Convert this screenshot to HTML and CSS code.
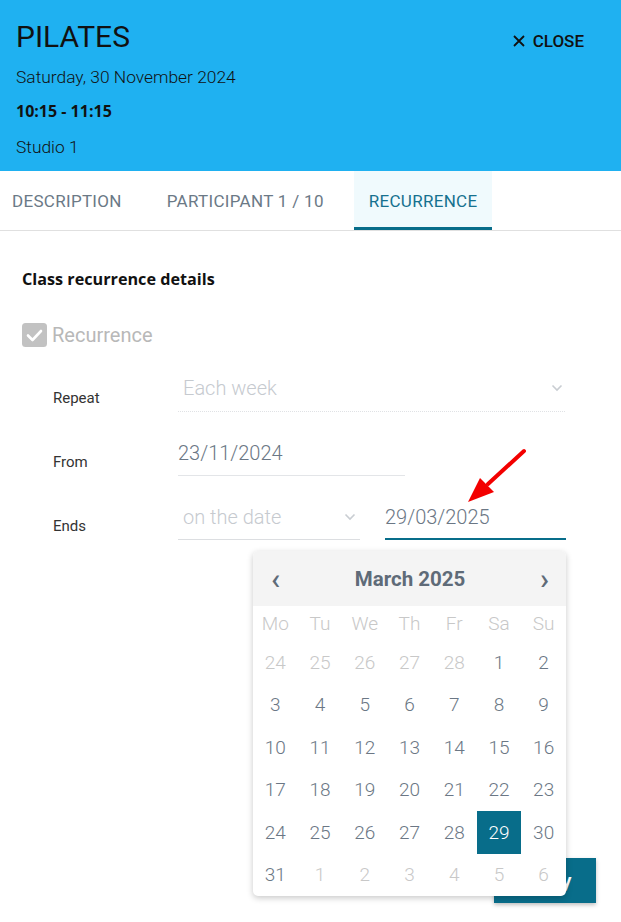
FILE: index.html
```html
<!DOCTYPE html>
<html>
<head>
<meta charset="utf-8">
<link rel="stylesheet" href="styles.css">
</head>
<body>
<header class="hdr">
  <div class="hdr-info">
    <div class="hdr-title">PILATES</div>
    <div class="hdr-date">Saturday, 30 November 2024</div>
    <div class="hdr-time">10:15 - 11:15</div>
    <div class="hdr-room">Studio 1</div>
  </div>
  <div class="close">
    <svg class="close-x" width="12" height="12" viewBox="0 0 12 12"><path d="M1 1L11 11M11 1L1 11" stroke="#111" stroke-width="1.8" fill="none"/></svg>
    <span>CLOSE</span>
  </div>
</header>
<nav class="tabs">
  <div class="tab first">DESCRIPTION</div>
  <div class="tab">PARTICIPANT 1 / 10</div>
  <div class="tab active">RECURRENCE</div>
</nav>
<main class="content">
  <h3 class="section-title">Class recurrence details</h3>
  <div class="check-row">
    <svg width="25" height="24" viewBox="0 0 25 24"><rect x="0" y="0" width="25" height="24" rx="3.5" fill="#c2c2c2"/><path d="M6 12.5L10.5 17L19 8" stroke="#fff" stroke-width="2.6" fill="none" stroke-linecap="round" stroke-linejoin="round"/></svg>
    <span class="check-label">Recurrence</span>
  </div>
  <div class="rows">
    <div class="row">
      <div class="label">Repeat</div>
      <div class="field select repeat">
        <span>Each week</span>
        <svg class="chev" width="12" height="8" viewBox="0 0 12 8"><path d="M1.5 1.5L6 6L10.5 1.5" stroke="#c9cdd2" stroke-width="1.6" fill="none"/></svg>
      </div>
    </div>
    <div class="row">
      <div class="label">From</div>
      <div class="field from"><span>23/11/2024</span></div>
    </div>
    <div class="row">
      <div class="label">Ends</div>
      <div class="field select ends-sel">
        <span>on the date</span>
        <svg class="chev" width="12" height="8" viewBox="0 0 12 8"><path d="M1.5 1.5L6 6L10.5 1.5" stroke="#c9cdd2" stroke-width="1.6" fill="none"/></svg>
      </div>
      <div class="date-wrap">
        <div class="field date"><span>29/03/2025</span></div>
        <div class="cal">
          <div class="cal-head">
            <span class="nav">&#8249;</span>
            <span class="month">March 2025</span>
            <span class="nav">&#8250;</span>
          </div>
          <div class="cal-grid">
            <div class="wd">Mo</div><div class="wd">Tu</div><div class="wd">We</div><div class="wd">Th</div><div class="wd">Fr</div><div class="wd">Sa</div><div class="wd">Su</div>
            <div class="d o">24</div><div class="d o">25</div><div class="d o">26</div><div class="d o">27</div><div class="d o">28</div><div class="d">1</div><div class="d">2</div>
            <div class="d">3</div><div class="d">4</div><div class="d">5</div><div class="d">6</div><div class="d">7</div><div class="d">8</div><div class="d">9</div>
            <div class="d">10</div><div class="d">11</div><div class="d">12</div><div class="d">13</div><div class="d">14</div><div class="d">15</div><div class="d">16</div>
            <div class="d">17</div><div class="d">18</div><div class="d">19</div><div class="d">20</div><div class="d">21</div><div class="d">22</div><div class="d">23</div>
            <div class="d">24</div><div class="d">25</div><div class="d">26</div><div class="d">27</div><div class="d">28</div><div class="d sel">29</div><div class="d">30</div>
            <div class="d">31</div><div class="d o">1</div><div class="d o">2</div><div class="d o">3</div><div class="d o">4</div><div class="d o">5</div><div class="d o">6</div>
          </div>
        </div>
      </div>
    </div>
  </div>
  <div class="footer">
    <button class="apply">Apply</button>
  </div>
</main>
<svg class="arrow" width="70" height="64" viewBox="0 0 70 64">
  <path d="M58 3L22 36" stroke="#f30000" stroke-width="4" stroke-linecap="round" fill="none"/>
  <polygon points="2,54 14,30 28,44" fill="#f30000"/>
</svg>
</body>
</html>
```
FILE: styles.css
```css
* { box-sizing: border-box; }
html, body { margin: 0; padding: 0; }
body {
  width: 621px;
  height: 922px;
  overflow: hidden;
  font-family: Roboto, "Liberation Sans", sans-serif;
  background: #fff;
  position: relative;
}
.hdr {
  height: 171px;
  background: #1fb1f1;
  display: flex;
  justify-content: space-between;
  align-items: flex-start;
  padding: 19px 37px 0 16px;
  color: #111;
}
.hdr-title {
  font-size: 30px;
  line-height: 36px;
  font-weight: 400;
}
.hdr-date {
  margin-top: 10px;
  font-size: 17.4px;
  line-height: 24px;
  font-weight: 300;
}
.hdr-time {
  margin-top: 10px;
  font-family: "Open Sans", "Noto Sans", sans-serif;
  font-size: 16px;
  line-height: 24px;
  font-weight: 700;
}
.hdr-room {
  margin-top: 12px;
  font-size: 17.4px;
  line-height: 24px;
  font-weight: 300;
}
.close {
  display: flex;
  align-items: center;
  gap: 8px;
  margin-top: 11px;
  font-size: 17px;
  font-weight: 500;
  line-height: 22px;
}
.close-x { display: block; }
.tabs {
  display: flex;
  gap: 15px;
  height: 60px;
  border-bottom: 1px solid #e0e0e0;
}
.tab {
  padding: 0 15px;
  display: flex;
  align-items: center;
  font-size: 17px;
  letter-spacing: 0.3px;
  color: #6b7986;
  font-weight: 400;
  border-bottom: 3px solid transparent;
  padding-top: 3px;
}
.tab.first { padding-left: 12px; }
.tab.active {
  background: #f0fafd;
  color: #16718f;
  border-bottom-color: #086d8a;
}
.content {
  padding: 0 22px;
}
.section-title {
  margin: 38px 0 0;
  font-family: "Open Sans", "Noto Sans", sans-serif;
  font-size: 16.2px;
  line-height: 20px;
  font-weight: 700;
  color: #111;
}
.check-row {
  margin-top: 33px;
  display: flex;
  align-items: center;
  gap: 5px;
  height: 26px;
}
.check-row svg { display: block; }
.check-label {
  font-size: 20px;
  color: #b8b8b8;
  font-weight: 400;
}
.rows {
  margin-top: 27px;
  padding-left: 31px;
  display: flex;
  flex-direction: column;
  gap: 27px;
}
.row {
  display: flex;
  align-items: flex-end;
}
.label {
  width: 125px;
  font-size: 15px;
  line-height: 20px;
  padding-bottom: 4px;
  color: #333;
}
.field {
  display: flex;
  align-items: center;
  justify-content: space-between;
  font-size: 20px;
  line-height: 24px;
  font-weight: 300;
  padding-top: 2px;
  padding-bottom: 10px;
  border-bottom: 1px solid #e3e5e8;
  color: #6b7785;
}
.field.select { color: #c6cacf; padding-left: 5px; padding-right: 2px; }
.field.repeat { width: 387px; border-bottom: 1px dotted #e0e2e5; padding-top: 1px; padding-bottom: 11px; }
.field.from { width: 227px; }
.field.ends-sel { width: 182px; padding-right: 4px; border-bottom: 1px solid #dcdee1; }
.chev { display: block; }
.date-wrap {
  position: relative;
  margin-left: 25px;
}
.field.date {
  width: 181px;
  border-bottom: 2px solid #086d8a;
  padding-bottom: 9px;
  color: #6b7785;
}
.cal {
  position: absolute;
  right: 0;
  top: calc(100% + 11px);
  width: 313px;
  background: #fff;
  border-radius: 5px;
  box-shadow: 0 2px 6px rgba(0,0,0,0.22);
  z-index: 5;
  overflow: hidden;
}
.cal-head {
  height: 55px;
  background: #f4f4f4;
  display: flex;
  align-items: center;
  justify-content: space-between;
  padding: 0 17px 0 18px;
  color: #5f6b78;
}
.nav {
  font-size: 30px;
  font-weight: 500;
  line-height: 30px;
  margin-top: 1px;
}
.month {
  font-size: 20.5px;
  font-weight: 700;
}
.cal-grid {
  display: grid;
  grid-template-columns: repeat(7, 1fr);
  grid-template-rows: 35px repeat(6, 42.5px);
}
.wd, .d {
  display: flex;
  align-items: center;
  justify-content: center;
  font-size: 19px;
  font-weight: 300;
}
.wd { color: #c8c8c8; }
.d { color: #6b7785; }
.d.o { color: #c8c8c8; }
.d.sel { background: #086d8a; color: #fff; }
.footer {
  display: flex;
  justify-content: flex-end;
  padding-right: 3px;
  margin-top: 318px;
}
.apply {
  width: 102px;
  height: 45px;
  background: #086d8a;
  color: #fff;
  border: none;
  font-family: Roboto, sans-serif;
  font-size: 21px;
  font-weight: 500;
  box-shadow: 0 2px 4px rgba(0,0,0,0.25);
  padding: 0;
}
.arrow {
  position: absolute;
  left: 466px;
  top: 448px;
}
```
